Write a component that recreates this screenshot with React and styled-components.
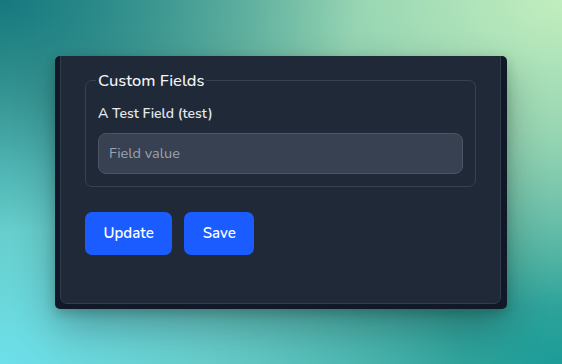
import React from "react";
import styled, { createGlobalStyle } from "styled-components";

const GlobalStyle = createGlobalStyle`
    html, body {
        margin: 0;
        padding: 0;
    }
    body {
        font-family: "Nunito", "Lato", "Noto Sans", sans-serif;
    }
`;

const Page = styled.div`
    width: 100vw;
    height: 100vh;
    display: flex;
    align-items: center;
    justify-content: center;
    background:
        radial-gradient(ellipse at 0% 0%, #16797f 0%, rgba(22, 121, 127, 0) 45%),
        radial-gradient(ellipse at 100% 0%, #c2eebe 0%, rgba(194, 238, 190, 0) 60%),
        radial-gradient(ellipse at 0% 100%, #6de0ea 0%, rgba(109, 224, 234, 0) 58%),
        radial-gradient(ellipse at 100% 100%, #1c9c98 0%, rgba(28, 156, 152, 0) 45%),
        radial-gradient(ellipse at 8% 45%, #5fc0b6 0%, rgba(95, 192, 182, 0) 35%),
        #5fb5a4;
`;

const Frame = styled.div`
    width: 452px;
    height: 253px;
    box-sizing: border-box;
    padding: 0 6px 5px 5px;
    display: flex;
    flex-direction: column;
    overflow: hidden;
    background-color: #111827;
    border-radius: 5px;
    box-shadow: 0 18px 40px rgba(0, 0, 0, 0.28), 0 4px 12px rgba(0, 0, 0, 0.2);
`;

const Panel = styled.div`
    flex: 1;
    margin-top: -11px;
    padding: 24px;
    background-color: #1f2937;
    border: 1px solid #323d4d;
    border-radius: 7px;
`;

const FieldSet = styled.fieldset`
    margin: 0;
    padding: 12px;
    border: 1px solid #374151;
    border-radius: 7px;
    display: flex;
    flex-direction: column;
    gap: 9px;
`;

const Legend = styled.legend`
    padding: 0 2px;
    margin-left: -2px;
    font-size: 16.5px;
    line-height: 22px;
    font-weight: 500;
    color: #f3f4f6;
`;

const Label = styled.label`
    font-size: 14px;
    line-height: 20px;
    font-weight: 600;
    color: #e5e7eb;
`;

const Input = styled.input`
    height: 41px;
    box-sizing: border-box;
    padding: 0 10px;
    font-family: inherit;
    font-size: 14.5px;
    color: #f3f4f6;
    background-color: #374151;
    border: 1px solid #4b5563;
    border-radius: 8px;
    outline: none;

    &::placeholder {
        color: #9ca3af;
    }
`;

const Actions = styled.div`
    display: flex;
    gap: 12px;
    margin-top: 25px;
`;

const Button = styled.button`
    height: 43px;
    padding: 0 18.5px;
    font-family: inherit;
    font-size: 15px;
    font-weight: 600;
    color: #ffffff;
    background-color: #1a5cff;
    border: none;
    border-radius: 7px;
    cursor: pointer;
`;

export default function App() {
    return (
        <>
            <GlobalStyle />
            <Page>
                <Frame>
                    <Panel>
                        <FieldSet>
                            <Legend>Custom Fields</Legend>
                            <Label htmlFor="test">A Test Field (test)</Label>
                            <Input id="test" placeholder="Field value" />
                        </FieldSet>
                        <Actions>
                            <Button>Update</Button>
                            <Button>Save</Button>
                        </Actions>
                    </Panel>
                </Frame>
            </Page>
        </>
    );
}
